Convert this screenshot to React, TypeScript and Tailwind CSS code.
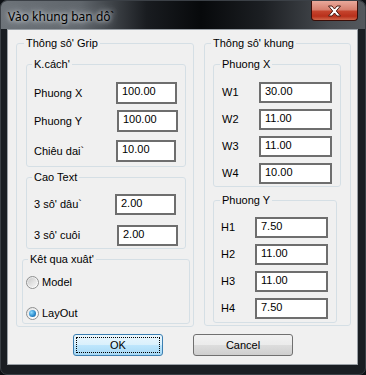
import React from "react";

function Box({ value, className }: { value: string; className: string }) {
  return (
    <div
      className={`border-2 border-[#6e6e6e] bg-white pl-[4px] pt-[1px] text-[11px] leading-[13px] text-black ${className}`}
    >
      {value}
    </div>
  );
}

function Radio({ checked }: { checked: boolean }) {
  return (
    <div className="flex h-[13px] w-[13px] items-center justify-center rounded-full border border-[#8e8f8f] bg-[linear-gradient(135deg,#e0e0e0,#f8f8f8_60%,#ffffff)]">
      {checked ? (
        <div className="h-[7px] w-[7px] rounded-full bg-[radial-gradient(circle_at_35%_35%,#8fdcff,#2f8fd0_55%,#0f4f87)]" />
      ) : (
        <div className="h-[9px] w-[9px] rounded-full bg-[linear-gradient(135deg,#c9c9c9,#e6e6e6_60%,#f4f4f4)]" />
      )}
    </div>
  );
}

export default function App() {
  return (
    <div className="h-[375px] w-[366px] bg-[#0d1014] font-['Liberation_Sans',Arial,sans-serif]">
      <div className="flex h-[375px] w-[366px] flex-col overflow-hidden rounded-[7px] border border-[#3b4046] bg-[#1a1e23]">
        <div className="flex h-[28px] items-start bg-[linear-gradient(to_right,#6d7379_0%,#60666c_22%,#191c20_40%,#07090b_55%,#1c1f23_72%,#474b50_90%,#54585d_100%)]">
          <div className="ml-[7px] mt-[8px] font-['Noto_Sans',sans-serif] text-[12px] leading-[16px] text-black [text-shadow:0_0_8px_rgba(230,235,240,0.95),0_0_4px_rgba(230,235,240,0.9)]">
            Vào khung ban dô`
          </div>
          <div className="ml-auto mr-[7px] flex h-[20px] w-[47px] items-center justify-center rounded-b-[4px] border border-t-0 border-[#3a0e08] bg-[linear-gradient(to_bottom,#e9a99b_0%,#d7806f_45%,#c4432c_55%,#b8301b_80%,#d0664a_100%)]">
            <svg width="15" height="12" viewBox="0 0 15 12">
              <path
                d="M1.5 1 H5 L7.5 4 L10 1 H13.5 L9.3 6 L13.5 11 H10 L7.5 8 L5 11 H1.5 L5.7 6 Z"
                fill="#ffffff"
                stroke="#4a1b12"
                strokeWidth="1"
                strokeLinejoin="round"
              />
            </svg>
          </div>
        </div>
        <div className="ml-[6px] h-[336px] w-[351px] border border-[#9aa0a6] bg-[#f0f0f0] text-[11px] leading-[13px] text-black">
          <div className="flex items-start">
            {/* Left group */}
            <fieldset className="ml-[8px] mt-[7px] h-[290px] w-[178px] rounded-[3px] border border-[#d5dfe5]">
              <legend className="ml-[7px] px-[2px] leading-[13px]">Thông sô' Grip</legend>
              <fieldset className="ml-[9px] mt-[8px] h-[109px] w-[160px] rounded-[3px] border border-[#d5dfe5]">
                <legend className="ml-[5px] px-[2px] leading-[13px]">K.cách'</legend>
                <div className="mt-[11px] flex h-[22px] items-center pl-[7px]">
                  <div className="w-[82px]">Phuong X</div>
                  <Box value="100.00" className="h-[22px] w-[61px]" />
                </div>
                <div className="mt-[6px] flex h-[22px] items-center pl-[7px]">
                  <div className="w-[83px]">Phuong Y</div>
                  <Box value="100.00" className="h-[22px] w-[61px]" />
                </div>
                <div className="mt-[8px] flex h-[22px] items-center pl-[7px]">
                  <div className="w-[82px]">Chiêu dai`</div>
                  <Box value="10.00" className="h-[22px] w-[60px]" />
                </div>
              </fieldset>
              <fieldset className="ml-[9px] mt-[4px] h-[78px] w-[160px] rounded-[3px] border border-[#d5dfe5]">
                <legend className="ml-[5px] px-[2px] leading-[13px]">Cao Text</legend>
                <div className="mt-[10px] flex h-[21px] items-center pl-[7px]">
                  <div className="w-[81px]">3 sô' dâu`</div>
                  <Box value="2.00" className="h-[21px] w-[61px]" />
                </div>
                <div className="mt-[10px] flex h-[21px] items-center pl-[7px]">
                  <div className="w-[83px]">3 sô' cuôi</div>
                  <Box value="2.00" className="h-[21px] w-[61px]" />
                </div>
              </fieldset>
              <fieldset className="ml-[5px] mt-[4px] h-[71px] w-[168px] rounded-[3px] border border-[#d5dfe5]">
                <legend className="ml-[5px] px-[2px] leading-[13px]">Kêt qua xuât'</legend>
                <div className="mt-[9px] flex h-[14px] items-center gap-[3px] pl-[3px]">
                  <Radio checked={false} />
                  <div>Model</div>
                </div>
                <div className="mt-[17px] flex h-[14px] items-center gap-[3px] pl-[3px]">
                  <Radio checked={true} />
                  <div>LayOut</div>
                </div>
              </fieldset>
            </fieldset>

            {/* Right group */}
            <fieldset className="ml-[10px] mt-[7px] h-[289px] w-[147px] rounded-[3px] border border-[#d5dfe5]">
              <legend className="ml-[6px] px-[2px] leading-[13px]">Thông sô' khung</legend>
              <fieldset className="ml-[8px] mt-[8px] h-[129px] w-[128px] rounded-[3px] border border-[#d5dfe5]">
                <legend className="ml-[6px] px-[2px] leading-[13px]">Phuong X</legend>
                <div className="mt-[11px] flex h-[21px] items-center pl-[8px]">
                  <div className="w-[37px]">W1</div>
                  <Box value="30.00" className="h-[21px] w-[73px]" />
                </div>
                <div className="mt-[6px] flex h-[21px] items-center pl-[8px]">
                  <div className="w-[37px]">W2</div>
                  <Box value="11.00" className="h-[21px] w-[73px]" />
                </div>
                <div className="mt-[6px] flex h-[21px] items-center pl-[8px]">
                  <div className="w-[37px]">W3</div>
                  <Box value="11.00" className="h-[21px] w-[73px]" />
                </div>
                <div className="mt-[6px] flex h-[21px] items-center pl-[8px]">
                  <div className="w-[37px]">W4</div>
                  <Box value="10.00" className="h-[21px] w-[73px]" />
                </div>
              </fieldset>
              <fieldset className="ml-[8px] mt-[7px] h-[129px] w-[124px] rounded-[3px] border border-[#d5dfe5]">
                <legend className="ml-[6px] px-[2px] leading-[13px]">Phuong Y</legend>
                <div className="mt-[10px] flex h-[21px] items-center pl-[7px]">
                  <div className="w-[34px]">H1</div>
                  <Box value="7.50" className="h-[21px] w-[73px]" />
                </div>
                <div className="mt-[6px] flex h-[21px] items-center pl-[7px]">
                  <div className="w-[34px]">H2</div>
                  <Box value="11.00" className="h-[21px] w-[73px]" />
                </div>
                <div className="mt-[6px] flex h-[21px] items-center pl-[7px]">
                  <div className="w-[34px]">H3</div>
                  <Box value="11.00" className="h-[21px] w-[73px]" />
                </div>
                <div className="mt-[6px] flex h-[21px] items-center pl-[7px]">
                  <div className="w-[34px]">H4</div>
                  <Box value="7.50" className="h-[21px] w-[73px]" />
                </div>
              </fieldset>
            </fieldset>
          </div>

          <div className="mt-[7px] flex">
            <div className="ml-[65px] flex h-[22px] w-[90px] items-center justify-center rounded-[3px] border border-[#3c7fb1] bg-[linear-gradient(to_bottom,#eaf6fd_0%,#d9f0fc_50%,#bee6fd_50%,#a7d9f5_100%)] p-[2px]">
              <div className="flex h-full w-full items-center justify-center border border-dotted border-black">
                OK
              </div>
            </div>
            <div className="ml-[30px] flex h-[22px] w-[100px] items-center justify-center rounded-[3px] border border-[#707070] bg-[linear-gradient(to_bottom,#f2f2f2_0%,#ebebeb_50%,#dddddd_50%,#cfcfcf_100%)]">
              Cancel
            </div>
          </div>
        </div>
      </div>
    </div>
  );
}
